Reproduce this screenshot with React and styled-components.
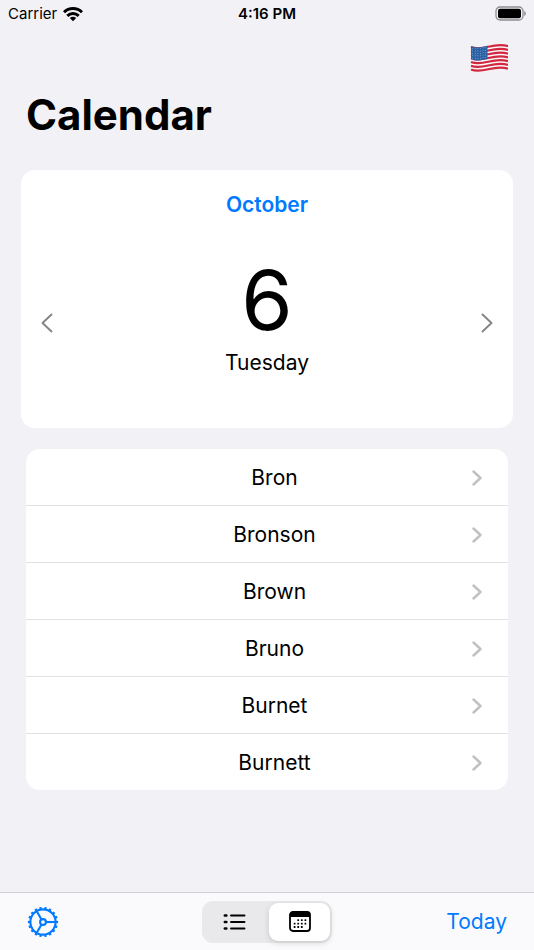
import React, { useState } from 'react';
import styled, { createGlobalStyle } from 'styled-components';


const names = ['Bron', 'Bronson', 'Brown', 'Bruno', 'Burnet', 'Burnett'];


function WifiIcon() {
  return (
    <svg width="20" height="15" viewBox="0 0 20 15" fill="none" stroke="#000" strokeWidth="3" aria-hidden="true">
      <path d="M1 5.3C6 .3 14 .3 19 5.3" />
      <path d="M4.3 8.8C7.6 5.6 12.4 5.6 15.7 8.8" />
      <path d="M6.8 11C8.6 9.4 11.4 9.4 13.2 11L10 14.2Z" fill="#000" stroke="none" />
    </svg>
  );
}

function BatteryIcon() {
  return (
    <svg width="31" height="16" viewBox="0 0 31 16" aria-hidden="true">
      <rect x="1" y="1" width="27" height="13" rx="4" fill="none" stroke="#8e8e92" strokeWidth="1.3" />
      <rect x="3" y="2.7" width="23" height="9.6" rx="2" fill="#000" />
      <path d="M29.2 5C31.4 5.8 31.4 9.2 29.2 10Z" fill="#8e8e92" />
    </svg>
  );
}

function FlagIcon() {
  const stripes = Array.from({ length: 13 }, (_, i) => i);
  const reds = stripes.filter((i) => i % 2 === 0);
  const whites = stripes.filter((i) => i % 2 === 1);
  const stars = Array.from({ length: 30 }, (_, i) => i);

  return (
    <svg width="38" height="28" viewBox="0 0 38 28" aria-hidden="true">
      {[...whites, ...reds].map((i) => (
        <path
          key={i}
          d={`M1 ${3 + i * 1.87}C13 ${8 + i * 1.87} 23 ${-2.4 + i * 1.87} 38 ${2.2 + i * 1.87}`}
          fill="none"
          stroke={i % 2 ? '#fbf7f8' : '#d2283f'}
          strokeWidth={i % 2 ? 2 : 2.1}
        />
      ))}
      <path d="M1 2C6 4.3 11 3.4 17.5 1.8V15C11 16.6 6 17.4 1 15.2Z" fill="#2c62a4" />
      {stars.map((i) => (
        <circle
          key={i}
          cx={2.7 + (i % 6) * 2.6}
          cy={4.6 + Math.floor(i / 6) * 2.4 - (i % 6 > 3 ? 0.8 : 0)}
          r=".45"
          fill="#b9d0ea"
        />
      ))}
    </svg>
  );
}

function GearIcon() {
  const teeth = Array.from({ length: 18 }, (_, i) => i * 20);

  return (
    <svg width="32" height="32" viewBox="0 0 32 32" fill="none" stroke="#007aff" strokeWidth="2.1" aria-hidden="true">
      <circle cx="16" cy="16" r="12.6" />
      {teeth.map((angle) => (
        <path key={angle} d="M28.8 16H31.1" strokeWidth="2.3" transform={`rotate(${angle} 16 16)`} />
      ))}
      <circle cx="16" cy="16" r="2.9" />
      {[0, 120, 240].map((angle) => (
        <path key={angle} d="M19 16H28.5" transform={`rotate(${angle} 16 16)`} />
      ))}
    </svg>
  );
}

function ListIcon() {
  return (
    <svg width="24" height="18" viewBox="0 0 24 18" stroke="#000" strokeLinecap="round" aria-hidden="true">
      {[2.5, 9, 15.5].map((y) => (
        <g key={y}>
          <path d={`M1.8 ${y}H3.4`} strokeWidth="2.4" />
          <path d={`M8 ${y}H21.5`} strokeWidth="1.9" />
        </g>
      ))}
    </svg>
  );
}

function CalendarIcon() {
  const dots = [[9.2, 9.2], [12.8, 9.2], [16.4, 9.2], [5.6, 12.6], [9.2, 12.6], [12.8, 12.6], [16.4, 12.6], [5.6, 16], [9.2, 16], [12.8, 16]];

  return (
    <svg width="22" height="21" viewBox="0 0 22 21" aria-hidden="true">
      <rect x="1" y="1" width="20" height="19" rx="3" fill="none" stroke="#000" strokeWidth="1.8" />
      <path d="M1 6V4C1 2 2 1 4 1H18C20 1 21 2 21 4V6Z" />
      {dots.map(([x, y]) => (
        <rect key={`${x}-${y}`} x={x - 0.9} y={y - 0.9} width="1.8" height="1.8" rx=".5" />
      ))}
    </svg>
  );
}

function Chevron({ left, large }) {
  return (
    <svg
      width={large ? 12 : 10}
      height={large ? 20 : 16}
      viewBox={large ? '0 0 12 20' : '0 0 10 16'}
      fill="none"
      stroke={large ? '#848488' : '#c1c1c4'}
      strokeWidth={large ? 1.9 : 2.4}
      strokeLinecap="round"
      strokeLinejoin="round"
      aria-hidden="true"
    >
      {large
        ? <path d={left ? 'M10.5 1.5L1.5 10L10.5 18.5' : 'M1.5 1.5L10.5 10L1.5 18.5'} />
        : <path d="M1.5 1.5L8.5 8L1.5 14.5" />}
    </svg>
  );
}


function App() {
  const [view, setView] = useState('calendar');

  return (
    <Screen>
      <GlobalStyle />
      <StatusBar>
        <Carrier>Carrier <WifiIcon /></Carrier>
        <Time>4:16 PM</Time>
        <Battery><BatteryIcon /></Battery>
      </StatusBar>

      <NavBar>
        <IconButton aria-label="Choose country"><FlagIcon /></IconButton>
      </NavBar>
      <Title>Calendar</Title>

      <Main>
        <DateCard>
          <MonthButton>October</MonthButton>
          <DayRow>
            <IconButton aria-label="Previous day"><Chevron left large /></IconButton>
            <Day>
              <DayNumber>6</DayNumber>
              <Weekday>Tuesday</Weekday>
            </Day>
            <IconButton aria-label="Next day"><Chevron large /></IconButton>
          </DayRow>
        </DateCard>

        <NameList>
          {names.map((name) => (
            <NameItem key={name}>
              <NameLink href={`#${name}`}>
                <span>{name}</span>
                <Chevron />
              </NameLink>
            </NameItem>
          ))}
        </NameList>
      </Main>

      <Toolbar>
        <IconButton aria-label="Settings"><GearIcon /></IconButton>
        <Segments role="radiogroup" aria-label="View">
          <Segment $active={view === 'list'}>
            <input
              type="radio"
              name="view"
              aria-label="List"
              checked={view === 'list'}
              onChange={() => setView('list')}
            />
            <ListIcon />
          </Segment>
          <Segment $active={view === 'calendar'}>
            <input
              type="radio"
              name="view"
              aria-label="Calendar"
              checked={view === 'calendar'}
              onChange={() => setView('calendar')}
            />
            <CalendarIcon />
          </Segment>
        </Segments>
        <TodayButton>Today</TodayButton>
      </Toolbar>
    </Screen>
  );
}


const GlobalStyle = createGlobalStyle`
  * {
    box-sizing: border-box;
  }

  body {
    margin: 0;
    background: #f2f1f6;
    color: #000;
    font-family: Inter, "Liberation Sans", sans-serif;
  }

  button {
    border: none;
    padding: 0;
    background: none;
    font-family: inherit;
    cursor: pointer;
  }

  svg {
    display: block;
  }
`;

const Screen = styled.div`
  display: flex;
  flex-direction: column;
  min-height: 100vh;
`;

const StatusBar = styled.div`
  display: grid;
  grid-template-columns: 1fr auto 1fr;
  align-items: center;
  height: 28px;
  padding: 0 8px;
  font-size: 15px;
  line-height: 20px;
`;

const Carrier = styled.div`
  display: flex;
  align-items: center;
  gap: 6px;
`;

const Time = styled.div`
  font-weight: 600;
`;

const Battery = styled.div`
  display: flex;
  justify-content: flex-end;
`;

const NavBar = styled.nav`
  display: flex;
  justify-content: flex-end;
  align-items: center;
  height: 60px;
  padding: 0 26px;
`;

const IconButton = styled.button`
  display: flex;
  align-items: center;
  justify-content: center;
`;

const Title = styled.h1`
  margin: 0;
  padding: 0 26px;
  font-size: 42px;
  font-weight: 700;
  line-height: 54px;
`;

const Main = styled.main`
  padding: 28px 21px 20px;
`;

const DateCard = styled.section`
  display: flex;
  flex-direction: column;
  gap: 38px;
  padding: 20px 20px 40px;
  background: #fff;
  border-radius: 14px;
`;

const MonthButton = styled.button`
  align-self: center;
  color: #007aff;
  font-size: 21px;
  font-weight: 600;
  line-height: 30px;
`;

const DayRow = styled.div`
  display: flex;
  align-items: center;
  justify-content: space-between;
`;

const Day = styled.div`
  padding-bottom: 10px;
  text-align: center;
`;

const DayNumber = styled.div`
  font-size: 83px;
  line-height: 84px;
`;

const Weekday = styled.div`
  margin-top: 6px;
  font-size: 21px;
  line-height: 30px;
`;

const NameList = styled.ul`
  margin: 21px 5px 0;
  padding: 0;
  background: #fff;
  border-radius: 14px;
  list-style: none;
`;

const NameItem = styled.li`
  & + & {
    border-top: 1px solid #e2e2e4;
  }
`;

const NameLink = styled.a`
  display: flex;
  align-items: center;
  height: 56px;
  padding: 2px 26px 0 51px;
  color: #000;
  font-size: 21px;
  line-height: 30px;
  text-decoration: none;

  span {
    flex: 1;
    text-align: center;
  }
`;

const Toolbar = styled.footer`
  position: sticky;
  bottom: 0;
  display: grid;
  grid-template-columns: 1fr auto 1fr;
  align-items: center;
  height: 58px;
  margin-top: auto;
  padding: 0 27px;
  background: #fafafd;
  border-top: 1px solid #d2d1d6;

  > :first-child {
    justify-self: start;
  }

  > :last-child {
    justify-self: end;
  }
`;

const Segments = styled.div`
  display: flex;
  gap: 4px;
  padding: 2px;
  background: #e9e9eb;
  border-radius: 11px;
`;

const Segment = styled.label`
  position: relative;
  display: flex;
  align-items: center;
  justify-content: center;
  width: 61px;
  height: 38px;
  border-radius: 9px;
  background: ${(props) => (props.$active ? '#fff' : 'transparent')};
  box-shadow: ${(props) => (props.$active ? '0 2px 6px rgba(0, 0, 0, 0.14)' : 'none')};

  input {
    position: absolute;
    inset: 0;
    width: 100%;
    height: 100%;
    margin: 0;
    opacity: 0;
    cursor: pointer;
  }
`;

const TodayButton = styled.button`
  color: #007aff;
  font-size: 21px;
  line-height: 30px;
`;


export default App;
